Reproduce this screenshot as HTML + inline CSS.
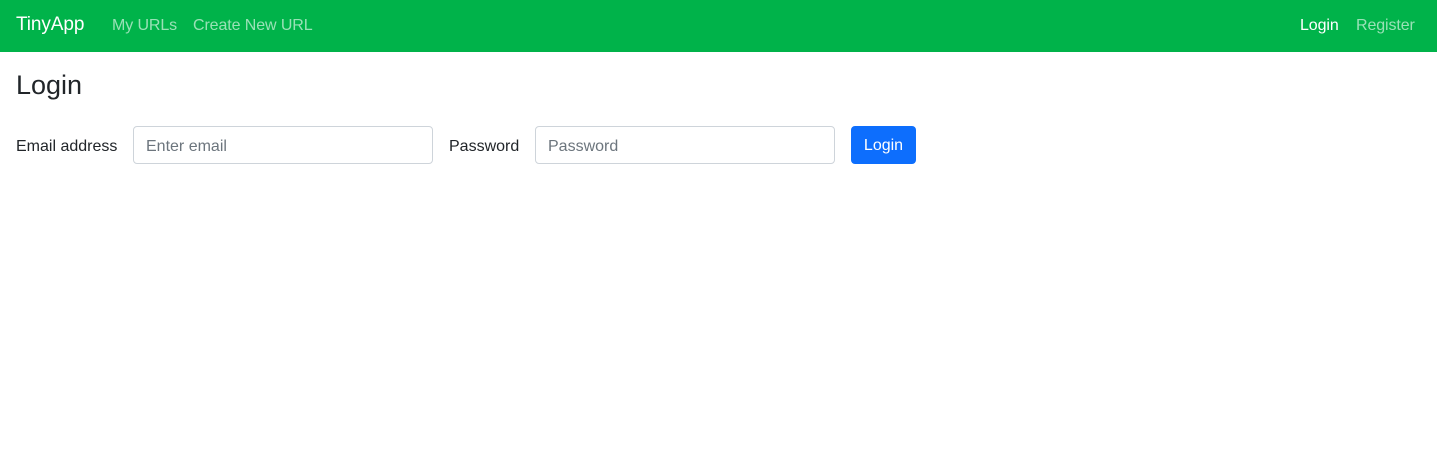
<!DOCTYPE html>
<html><head><style>
body{margin:0;font-family:"Liberation Sans",sans-serif;background:#fff;color:#212529;}
.nav{height:52px;background:#00b34a;position:relative;}
.nav span{position:absolute;top:17px;font-size:16px;color:rgba(255,255,255,.6);letter-spacing:-0.1px;}
.brand{left:16px;font-size:19px!important;top:14px!important;color:#fff!important;}
h1{position:absolute;left:16px;top:70px;margin:0;font-size:27px;font-weight:500;}
.lbl{position:absolute;top:138px;font-size:16px;}
.inp{position:absolute;top:126px;width:298px;height:36px;border:1px solid #ced4da;border-radius:4px;box-sizing:content-box;}
.inp span{position:absolute;left:12px;top:11px;color:#6c757d;font-size:16px;}
.btn{position:absolute;left:851px;top:126px;width:65px;height:38px;background:#0d6efd;border-radius:4px;color:#fff;font-size:16px;text-align:center;line-height:40px;}
</style></head><body>
<div class="nav">
<span class="brand">TinyApp</span>
<span style="left:112px">My URLs</span>
<span style="left:193px">Create New URL</span>
<span style="left:1300px;color:#fff">Login</span>
<span style="left:1356px">Register</span>
</div>
<h1>Login</h1>
<div class="lbl" style="left:16px">Email address</div>
<div class="inp" style="left:133px"><span>Enter email</span></div>
<div class="lbl" style="left:449px">Password</div>
<div class="inp" style="left:535px"><span>Password</span></div>
<div class="btn">Login</div>
</body></html>
